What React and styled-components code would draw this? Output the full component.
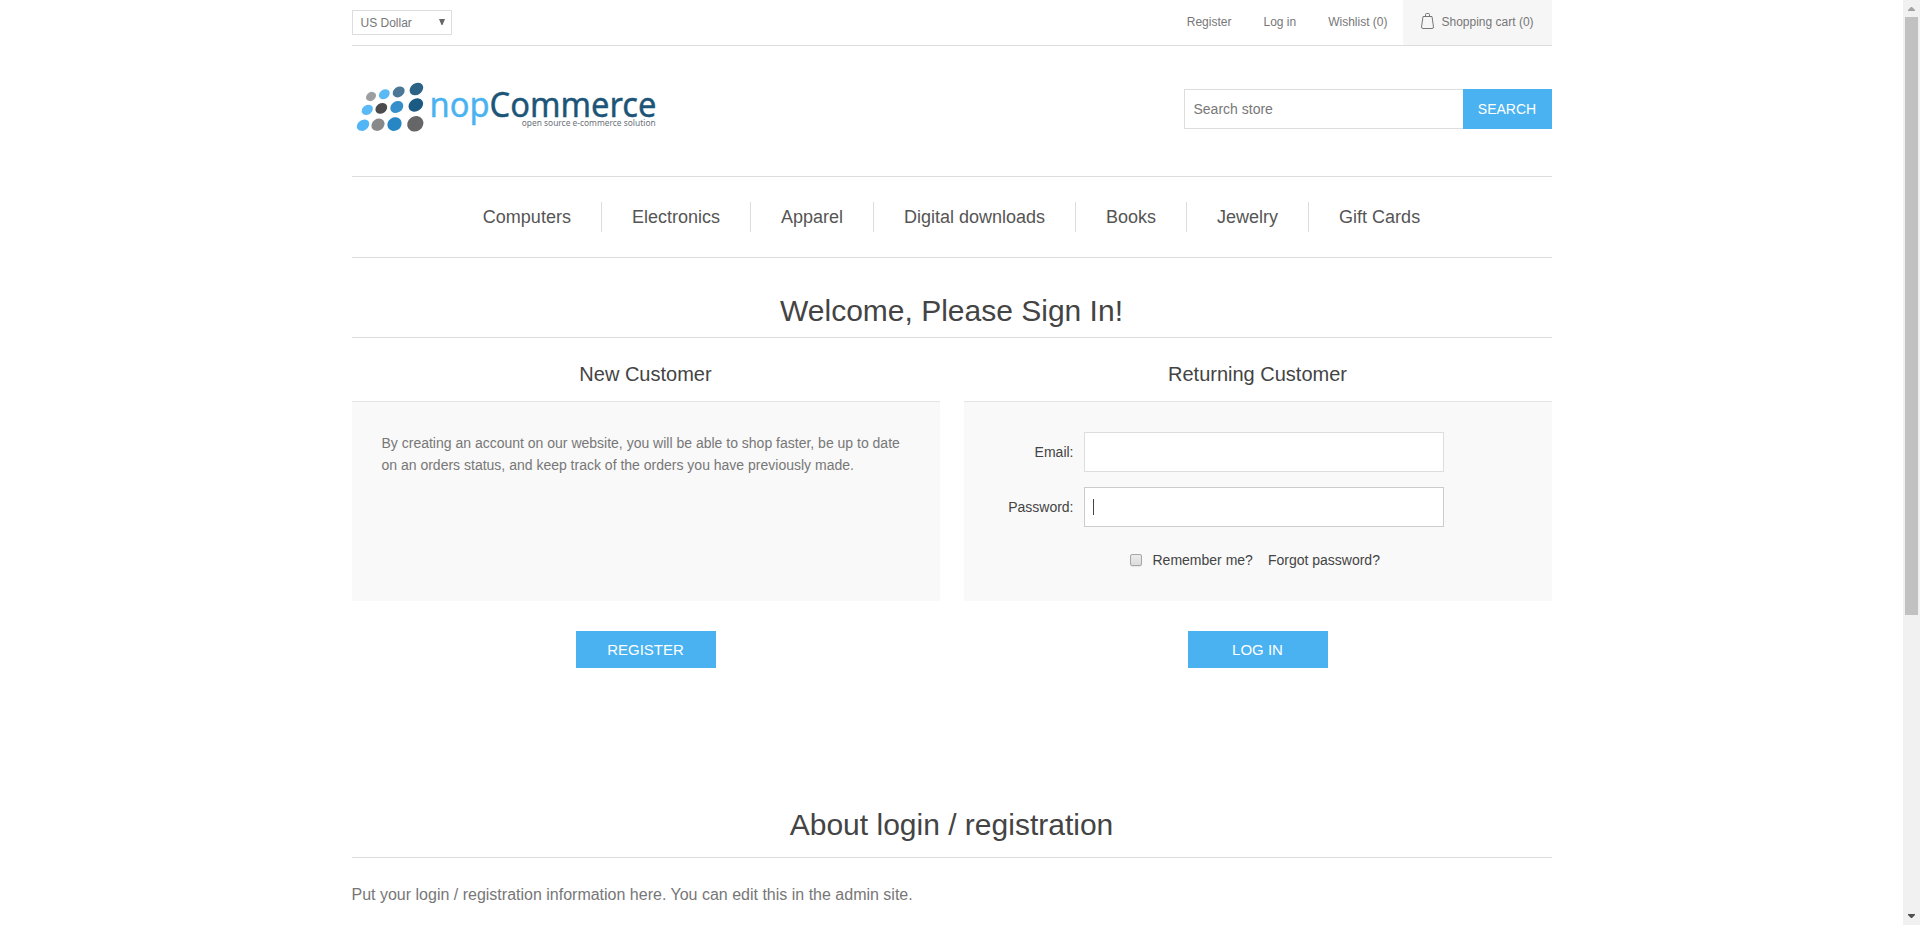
import React from "react";
import styled, { createGlobalStyle } from "styled-components";

const Global = createGlobalStyle`
  * { box-sizing: border-box; margin: 0; padding: 0; }
  html, body { background: #fff; overflow: hidden; }
  body { font-family: "Liberation Sans", Arial, sans-serif; font-size: 14px; color: #777; }
  a { color: inherit; text-decoration: none; }
`;

const line = "#dddddd";
const blue = "#4ab2f1";

const Window = styled.div`
  display: flex;
  height: 925px;
  overflow: hidden;
`;
const Page = styled.div`
  flex: 1;
  overflow: hidden;
`;
const Wrapper = styled.div`
  width: 1200px;
  margin: 0 auto;
`;
const HeaderUpper = styled.div`
  height: 46px;
  border-bottom: 1px solid ${line};
  display: flex;
  justify-content: space-between;
  font-size: 12px;
`;
const Currency = styled.div`
  width: 100px;
  height: 25px;
  margin-top: 10px;
  padding: 0 6px 0 8px;
  border: 1px solid ${line};
  display: flex;
  align-items: center;
  justify-content: space-between;
  line-height: 14px;
`;
const CurrencyArrow = styled.svg`
  display: block;
  margin-bottom: 2px;
`;
const Links = styled.nav`
  display: flex;
  line-height: 45px;
`;
const TopLink = styled.a`
  height: 45px;
  line-height: 44px;
  margin-right: ${(p) => p.$gap || 32}px;
`;
const Cart = styled.a`
  width: 149px;
  height: 45px;
  line-height: 44px;
  background: #f6f6f6;
  display: flex;
  padding-left: 18px;
  gap: 8px;
  svg { margin-top: 12px; }
`;
const HeaderLower = styled.header`
  height: 131px;
  border-bottom: 1px solid ${line};
  display: flex;
  justify-content: space-between;
`;
const LogoLink = styled.a`
  margin-top: 32px;
  svg { display: block; }
`;
const Search = styled.form`
  display: flex;
  margin-top: 43px;
  height: 40px;
`;
const SearchInput = styled.input`
  width: 279px;
  border: 1px solid ${line};
  border-right: 0;
  padding: 0 9px;
  font: 14px "Liberation Sans", Arial, sans-serif;
  color: #777;
  outline: none;
  &::placeholder { color: #777; }
`;
const SearchButton = styled.button`
  width: 89px;
  border: 0;
  background: ${blue};
  color: #fff;
  font: 14px "Liberation Sans", Arial, sans-serif;
`;
const Menu = styled.nav`
  height: 81px;
  border-bottom: 1px solid ${line};
  display: flex;
  justify-content: center;
  padding-top: 25px;
`;
const MenuItem = styled.a`
  height: 30px;
  line-height: 30px;
  padding: 0 30px;
  font-size: 18px;
  color: #555;
  & + & { border-left: 1px solid ${line}; }
`;
const Heading = styled.h1`
  height: ${(p) => p.$height}px;
  padding-top: ${(p) => p.$top}px;
  border-bottom: 1px solid ${line};
  font-weight: 400;
  font-size: 30px;
  line-height: 34px;
  text-align: center;
  color: #444;
`;
const Columns = styled.div`
  display: flex;
  justify-content: space-between;
`;
const Column = styled.section`
  width: 588px;
  display: flex;
  flex-direction: column;
  align-items: center;
`;
const ColumnTitle = styled.h2`
  height: 64px;
  width: 100%;
  padding-top: 25px;
  border-bottom: 1px solid #e4e4e4;
  font-weight: 400;
  font-size: 20px;
  line-height: 23px;
  text-align: center;
  color: #444;
`;
const Panel = styled.div`
  width: 100%;
  height: 199px;
  background: #f9f9f9;
  padding: 30px;
  line-height: 22px;
`;
const Field = styled.label`
  display: flex;
  align-items: center;
  height: 40px;
  margin-bottom: 15px;
  color: #444;
`;
const FieldName = styled.span`
  width: 80px;
  margin-right: 10px;
  text-align: right;
`;
const FieldInput = styled.div`
  width: 360px;
  height: 40px;
  border: 1px solid ${(p) => (p.$focused ? "#ccc" : line)};
  background: #fff;
  padding-left: 8px;
  display: flex;
  align-items: center;
`;
const Caret = styled.i`
  width: 1px;
  height: 16px;
  background: #444;
`;
const Options = styled.div`
  display: flex;
  align-items: center;
  height: 22px;
  margin: 22px 0 0 136px;
  color: #444;
`;
const Checkbox = styled.span`
  width: 12px;
  height: 12px;
  margin-right: 11px;
  border: 1px solid #a6a6a6;
  border-radius: 2px;
  background: linear-gradient(#ececec, #dcdcdc);
  box-shadow: 0 1px 1px rgba(0, 0, 0, 0.08);
`;
const Forgot = styled.a`
  margin-left: 15px;
`;
const Action = styled.button`
  width: 140px;
  height: 37px;
  margin-top: 30px;
  border: 0;
  background: ${blue};
  color: #fff;
  font: 15px "Liberation Sans", Arial, sans-serif;
`;
const Topic = styled.section`
  margin-top: 120px;
`;
const TopicText = styled.p`
  padding-top: 24px;
  font-size: 16px;
  line-height: 26px;
`;
const Scrollbar = styled.div`
  width: 17px;
  background: #f1f1f1;
  display: flex;
  flex-direction: column;
  align-items: center;
  justify-content: space-between;
`;
const ScrollTop = styled.div`
  display: flex;
  flex-direction: column;
  svg { display: block; margin-left: 3px; }
`;
const Thumb = styled.div`
  width: 13px;
  height: 598px;
  background: #c1c1c1;
`;

const dots = [
  [371, 96.5, 5.4, 4.2, "#9c9fa2"],
  [384.3, 94.2, 5.8, 4.5, "#5bb9f6"],
  [398.7, 91.9, 6.4, 5, "#4b7896"],
  [416.4, 89, 7.3, 5.7, "#2c6285"],
  [367.3, 109.8, 6, 4.7, "#5bb9f6"],
  [381.3, 108.4, 6.3, 5, "#4b4b4d"],
  [396.8, 107, 6.9, 5.6, "#368fcb"],
  [415.8, 105, 7.8, 6.2, "#1b5a83"],
  [363, 125.2, 6.7, 5.1, "#52b5f5"],
  [378, 124.7, 6.9, 5.8, "#87898b"],
  [394.5, 124.1, 7.4, 6.6, "#2786c4"],
  [415.3, 123.8, 8.4, 7.5, "#666668"],
];

const Logo = () => (
  <svg width="310" height="62" viewBox="352 78 310 62">
    {dots.map(([x, y, rx, ry, fill]) => (
      <ellipse key={`${x}-${y}`} cx={x} cy={y} rx={rx} ry={ry} fill={fill} transform={`rotate(-35 ${x} ${y})`} />
    ))}
    <g fontFamily='"Noto Sans", sans-serif'>
      <text x="429.500" y="116.500" fontSize="34" strokeWidth="0.4" textLength="227" lengthAdjust="spacingAndGlyphs">
        <tspan fill="#4ab2f1" stroke="#4ab2f1">nop</tspan><tspan fill="#1c5577" stroke="#1c5577">Commerce</tspan>
      </text>
      <text x="521.700" y="126.300" fontSize="8.500" fill="#6b7278" textLength="134" lengthAdjust="spacingAndGlyphs">open source e-commerce solution</text>
    </g>
  </svg>
);

const Bag = () => (
  <svg width="13" height="18" viewBox="0 0 13 18" fill="none" stroke="#777">
    <path d="M2 4.500h9L12.500 15q0 1.500-1.500 1.500H2Q.5 16.500.5 15z" />
    <path d="M4.500 4.500V2.500q0-1 1-1h2q1 0 1 1v2" />
  </svg>
);

const menu = ["Computers", "Electronics", "Apparel", "Digital downloads", "Books", "Jewelry", "Gift Cards"];

export default function App() {
  return (
    <Window>
      <Global />
      <Page>
        <Wrapper>
          <HeaderUpper>
            <Currency>
              US Dollar
              <CurrencyArrow width="6" height="6"><path d="M0 0h6L3.500 6h-1z" fill="#666" /></CurrencyArrow>
            </Currency>
            <Links>
              <TopLink href="#">Register</TopLink>
              <TopLink href="#">Log in</TopLink>
              <TopLink href="#" $gap={15}>Wishlist (0)</TopLink>
              <Cart href="#"><Bag />Shopping cart (0)</Cart>
            </Links>
          </HeaderUpper>
          <HeaderLower>
            <LogoLink href="#"><Logo /></LogoLink>
            <Search>
              <SearchInput placeholder="Search store" />
              <SearchButton type="button">SEARCH</SearchButton>
            </Search>
          </HeaderLower>
          <Menu>
            {menu.map((m) => <MenuItem href="#" key={m}>{m}</MenuItem>)}
          </Menu>
          <Heading $height={80} $top={36}>Welcome, Please Sign In!</Heading>
          <Columns>
            <Column>
              <ColumnTitle>New Customer</ColumnTitle>
              <Panel>
                By creating an account on our website, you will be able to shop faster, be up to date
                on an orders status, and keep track of the orders you have previously made.
              </Panel>
              <Action>REGISTER</Action>
            </Column>
            <Column>
              <ColumnTitle>Returning Customer</ColumnTitle>
              <Panel>
                <Field><FieldName>Email:</FieldName><FieldInput /></Field>
                <Field><FieldName>Password:</FieldName><FieldInput $focused><Caret /></FieldInput></Field>
                <Options><Checkbox />Remember me?<Forgot href="#">Forgot password?</Forgot></Options>
              </Panel>
              <Action>LOG IN</Action>
            </Column>
          </Columns>
          <Topic>
            <Heading as="h2" $height={70} $top={20}>About login / registration</Heading>
            <TopicText>Put your login / registration information here. You can edit this in the admin site.</TopicText>
          </Topic>
        </Wrapper>
      </Page>
      <Scrollbar>
        <ScrollTop>
          <svg width="7" height="17"><path d="M0 11V10L3 7h1l3 3v1z" fill="#a3a3a3" /></svg>
          <Thumb />
        </ScrollTop>
        <svg width="7" height="17"><path d="M0 6h7v1L4 10H3L0 7z" fill="#505050" /></svg>
      </Scrollbar>
    </Window>
  );
}
